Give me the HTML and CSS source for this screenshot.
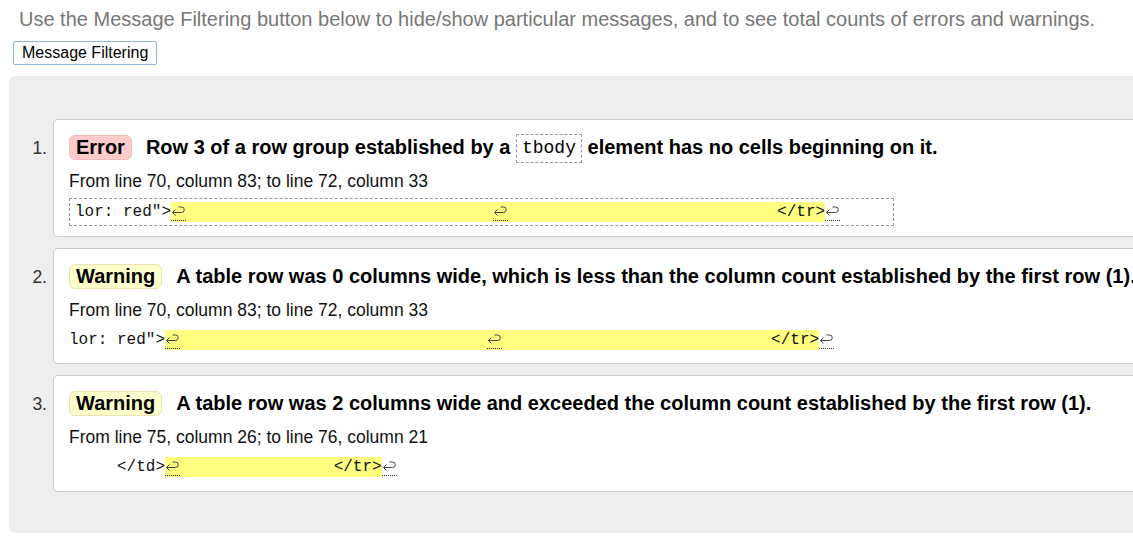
FILE: index.html
```html
<!DOCTYPE html>
<html lang="en">
<head>
<meta charset="utf-8">
<title>Validation messages</title>
<link rel="stylesheet" href="styles.css">
</head>
<body>
<div class="page">
  <p class="intro">Use the Message Filtering button below to hide/show particular messages, and to see total counts of errors and warnings.</p>
  <button class="filter-btn" type="button">Message Filtering</button>
  <div class="results">
    <ol class="messages">
      <li class="msg">
        <span class="num">1.</span>
        <div class="card">
          <p class="title"><strong class="badge error">Error</strong><span class="text">Row 3 of a row group established by a <code class="tag">tbody</code> element has no cells beginning on it.</span></p>
          <p class="loc">From line 70, column 83; to line 72, column 33</p>
          <code class="extract boxed">lor: red"&gt;<b class="hl"><span class="lf" title="Line break"><svg viewBox="0 0 15 17" width="15" height="17"><path d="M7.5 4H10.5A2.75 2.75 0 0 1 10.5 9.5H1.5M4.5 6.5L1.5 9.5L4.5 12.5"/></svg></span>                                <span class="lf" title="Line break"><svg viewBox="0 0 15 17" width="15" height="17"><path d="M7.5 4H10.5A2.75 2.75 0 0 1 10.5 9.5H1.5M4.5 6.5L1.5 9.5L4.5 12.5"/></svg></span>                            &lt;/tr&gt;</b><span class="lf" title="Line break"><svg viewBox="0 0 15 17" width="15" height="17"><path d="M7.5 4H10.5A2.75 2.75 0 0 1 10.5 9.5H1.5M4.5 6.5L1.5 9.5L4.5 12.5"/></svg></span>     </code>
        </div>
      </li>
      <li class="msg">
        <span class="num">2.</span>
        <div class="card">
          <p class="title"><strong class="badge warning">Warning</strong><span class="text">A table row was 0 columns wide, which is less than the column count established by the first row (1).</span></p>
          <p class="loc">From line 70, column 83; to line 72, column 33</p>
          <code class="extract">lor: red"&gt;<b class="hl"><span class="lf" title="Line break"><svg viewBox="0 0 15 17" width="15" height="17"><path d="M7.5 4H10.5A2.75 2.75 0 0 1 10.5 9.5H1.5M4.5 6.5L1.5 9.5L4.5 12.5"/></svg></span>                                <span class="lf" title="Line break"><svg viewBox="0 0 15 17" width="15" height="17"><path d="M7.5 4H10.5A2.75 2.75 0 0 1 10.5 9.5H1.5M4.5 6.5L1.5 9.5L4.5 12.5"/></svg></span>                            &lt;/tr&gt;</b><span class="lf" title="Line break"><svg viewBox="0 0 15 17" width="15" height="17"><path d="M7.5 4H10.5A2.75 2.75 0 0 1 10.5 9.5H1.5M4.5 6.5L1.5 9.5L4.5 12.5"/></svg></span></code>
        </div>
      </li>
      <li class="msg">
        <span class="num">3.</span>
        <div class="card">
          <p class="title"><strong class="badge warning">Warning</strong><span class="text">A table row was 2 columns wide and exceeded the column count established by the first row (1).</span></p>
          <p class="loc">From line 75, column 26; to line 76, column 21</p>
          <code class="extract last">     &lt;/td&gt;<b class="hl"><span class="lf" title="Line break"><svg viewBox="0 0 15 17" width="15" height="17"><path d="M7.5 4H10.5A2.75 2.75 0 0 1 10.5 9.5H1.5M4.5 6.5L1.5 9.5L4.5 12.5"/></svg></span>                &lt;/tr&gt;</b><span class="lf" title="Line break"><svg viewBox="0 0 15 17" width="15" height="17"><path d="M7.5 4H10.5A2.75 2.75 0 0 1 10.5 9.5H1.5M4.5 6.5L1.5 9.5L4.5 12.5"/></svg></span></code>
        </div>
      </li>
    </ol>
  </div>
</div>
</body>
</html>
```

FILE: styles.css
```css
html, body {
  margin: 0;
  padding: 0;
  background: #fff;
  overflow: hidden;
}

body {
  font-family: "Liberation Sans", Arial, sans-serif;
  color: #000;
}

.page {
  padding: 8px 0 0 9px;
}

.intro {
  margin: 0 0 0 10px;
  font-size: 20px;
  line-height: 22px;
  color: #777;
  white-space: nowrap;
}

.filter-btn {
  display: block;
  margin: 11px 0 0 4px;
  padding: 2px 8px;
  font-family: "Liberation Sans", Arial, sans-serif;
  font-size: 16px;
  line-height: 18px;
  color: #000;
  background: #fff;
  border: 1px solid #93b3e3;
  border-radius: 2px;
}

.results {
  margin-top: 11px;
  width: 1280px;
  padding: 43px 0 41px 0;
  background: #eee;
  border-radius: 6px;
}

.messages {
  list-style: none;
  margin: 0;
  padding: 0;
  display: flex;
  flex-direction: column;
  gap: 11px;
}

.msg {
  display: flex;
  align-items: baseline;
}

.num {
  flex: 0 0 44px;
  box-sizing: border-box;
  padding-right: 6px;
  text-align: right;
  font-size: 17.5px;
  color: #333;
}

.card {
  flex: 1;
  background: #fff;
  border: 1px solid #ccc;
  border-radius: 5px;
  padding: 10.5px 0 10px 15px;
}

.title {
  margin: 0;
  font-size: 20px;
  font-weight: bold;
  line-height: 32px;
  white-space: nowrap;
}

.badge {
  display: inline-block;
  padding: 1px 6px;
  line-height: 21px;
  border-radius: 6px;
  margin-right: 14px;
}

.badge.error {
  background: #fcc;
  border: 1px solid #f3bcbc;
}

.badge.warning {
  background: #ffc;
  border: 1px solid #ebe3b0;
}

.tag {
  display: inline-block;
  vertical-align: 1px;
  font-family: "Liberation Mono", "DejaVu Sans Mono", monospace;
  font-size: 18px;
  font-weight: normal;
  line-height: 27px;
  padding: 0 5px;
  border: 1px dashed #999;
}

.loc {
  margin: 7.5px 0 0 0;
  font-size: 17.5px;
  line-height: 22px;
  color: #111;
}

.extract {
  display: block;
  width: fit-content;
  margin-top: 6px;
  font-family: "Liberation Mono", "DejaVu Sans Mono", monospace;
  font-size: 16px;
  line-height: 26px;
  white-space: pre;
  color: #111;
}

.extract.boxed {
  border: 1px dashed #999;
  padding: 0 5px;
}

.extract.last {
  margin-bottom: 1px;
}

.hl {
  font-weight: normal;
  background: #ffff80;
  padding: 1px 0;
}

.lf {
  display: inline-block;
  width: 15px;
  height: 17px;
  vertical-align: -5px;
  border-bottom: 1px dotted #333;
}

.lf svg {
  display: block;
  fill: none;
  stroke: #444;
  stroke-width: 1;
}
```
